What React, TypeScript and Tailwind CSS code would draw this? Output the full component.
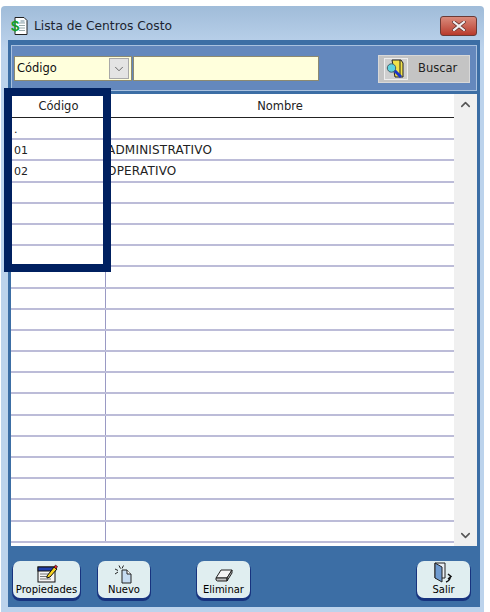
import React from 'react';
import { ChevronDown, ChevronUp } from 'lucide-react';

const rows = [
  ['.', '.'],
  ['01', 'ADMINISTRATIVO'],
  ['02', 'OPERATIVO'],
  ...Array.from({ length: 17 }, () => ['', '']),
];

function TitleIcon() {
  return (
    <svg width="18" height="20" viewBox="0 0 18 20">
      <path d="M4 1.500h9l3 3v14H4z" fill="#fff" stroke="#222" />
      <path d="M8 7h6M8 9.500h6M8 12h6M8 14.500h6" stroke="#9aa" />
      <rect x="9.500" y="4" width="4" height="3" fill="#b8c6cc" />
      <text x="0" y="15" fontSize="15" fontWeight="700" fill="#12a02a" fontFamily="Liberation Sans, sans-serif">$</text>
    </svg>
  );
}

function CloseIcon() {
  return (
    <svg width="14" height="10" viewBox="0 0 14 10">
      <path d="M2 1l10 8M12 1L2 9" stroke="#5a2a26" strokeWidth="3.500" strokeLinecap="square" />
      <path d="M2 1l10 8M12 1L2 9" stroke="#f1eef0" strokeWidth="2.200" strokeLinecap="square" />
    </svg>
  );
}

function SearchIcon() {
  return (
    <svg width="20" height="20" viewBox="0 0 20 20">
      <path d="M6 1h9l2 3v14H9z" fill="#f2e24a" stroke="#222" />
      <path d="M14 1v15" stroke="#222" />
      <path d="M8 11l7 7" stroke="#1a35c9" strokeWidth="3" />
      <circle cx="5.500" cy="9" r="4.200" fill="#5fd3e0" stroke="#44606a" />
    </svg>
  );
}

function PropiedadesIcon() {
  return (
    <svg width="22" height="20" viewBox="0 0 22 20">
      <rect x="2" y="3" width="17" height="15" fill="#f4f4f4" stroke="#111" />
      <rect x="2" y="3" width="17" height="4" fill="#1f3fae" stroke="#111" />
      <path d="M4 10h9M4 12.500h9M4 15h11" stroke="#777" />
      <path d="M11 12l7-9 3 2-7 8-3 1z" fill="#f6d21f" stroke="#111" />
      <path d="M18 3l1.500-2 2 1.500-1.500 2.500z" fill="#e01f2d" stroke="#111" strokeWidth=".6" />
    </svg>
  );
}

function NuevoIcon() {
  return (
    <svg width="20" height="20" viewBox="0 0 20 20">
      <path d="M8 6h5l4 4v9H8z" fill="#c6dcf2" stroke="#222" />
      <path d="M13 6v4h4" fill="#fff" stroke="#222" />
      <path d="M5 1.500l1.500 3M1 5l3 1.500M1 10l3-2M9.500 1.500L8 4.500" stroke="#222" />
    </svg>
  );
}

function EliminarIcon() {
  return (
    <svg width="20" height="16" viewBox="0 0 20 16">
      <path d="M7 2h11l-5 8H2z" fill="#f3f3f3" stroke="#222" />
      <path d="M2 10h11v3H3.500L2 12zM13 10l5-8v3l-5 8z" fill="#bdbdbd" stroke="#222" />
    </svg>
  );
}

function SalirIcon() {
  return (
    <svg width="22" height="22" viewBox="0 0 22 22">
      <path d="M2 1h10v15H2z" fill="#e8eef4" stroke="#222" />
      <path d="M2 1l7 4v15l-7-4z" fill="#6f9bd0" stroke="#222" />
      <path d="M15 12l3 2.500-3 2.500M13 20c2-.5 4-2.500 4.500-5.500" fill="none" stroke="#111" strokeWidth="1.500" />
    </svg>
  );
}

function ActionButton({ label, icon, className }: { label: string; icon: React.ReactNode; className: string }) {
  return (
    <button className={`flex h-[37px] flex-col items-center justify-end rounded-[7px] bg-[#e0eef0] pb-[2px] text-[10px] leading-[12px] text-black shadow-[0_2px_0_1px_#17337f] ${className}`}>
      {icon}
      <span>{label}</span>
    </button>
  );
}

export default function App() {
  return (
    <div className="relative h-[612px] w-[490px] overflow-hidden bg-white pt-[6px] font-['DejaVu_Sans','Liberation_Sans',sans-serif]">
      <div className="ml-[1px] flex h-[606px] w-[483px] flex-col rounded-t-[4px] bg-gradient-to-b from-[#a0bcd9] from-0% to-[#bcd3ec] to-[7%] pl-[7px] pr-[4px] pb-[5px]">
        {/* title bar */}
        <div className="flex h-[34px] shrink-0 items-center pl-[3px] pt-[6px]">
          <TitleIcon />
          <span className="ml-[5px] pt-[1px] text-[12.25px] text-[#1c2430]">Lista de Centros Costo</span>
          <button className="ml-auto mr-[3px] flex h-[20px] w-[37px] items-center justify-center rounded-[3px] border border-[#6b3a36] bg-gradient-to-b from-[#d98a7c] to-[#b8392b]">
            <CloseIcon />
          </button>
        </div>

        <div className="flex min-h-0 flex-1 flex-col bg-[#3c6ea5] px-[3px] pt-[5px]">
          {/* search strip */}
          <div className="flex h-[46px] shrink-0 items-center border border-[#a9c1df] bg-[#6488bd] pl-[2px] pr-[6px] pt-[1px]">
            <div className="flex h-[25px] w-[118px] items-center border border-[#8d8a70] bg-[#ffffdc] pl-[2px] text-[11.5px] text-[#111]">
              <span className="pt-[1px]">Código</span>
              <span className="ml-auto mr-[2px] flex h-[21px] w-[20px] items-center justify-center border border-[#a8a8a8] bg-[#e4e4e4] text-[#555]">
                <ChevronDown size={14} strokeWidth={1.500} />
              </span>
            </div>
            <div className="ml-[1px] h-[25px] w-[186px] border border-[#8d8a70] bg-[#ffffdc]" />
            <button className="ml-auto flex h-[28px] w-[92px] items-center border border-[#d8d8d8] bg-[#c4c4c4] pl-[5px] text-[11.5px] text-[#222]">
              <span className="flex h-[22px] w-[24px] items-center justify-center border border-[#eee] bg-[#cfcfcf]">
                <SearchIcon />
              </span>
              <span className="ml-[10px]">Buscar</span>
            </button>
          </div>

          {/* grid */}
          <div className="mt-[3px] flex h-[452px] shrink-0 overflow-hidden bg-white">
            <div className="w-[443px] shrink-0">
              <div className="mb-[1px] flex h-[24px] border-b border-[#222] pt-[3px] text-[11.5px] text-[#222]">
                <div className="flex w-[95px] items-center justify-center">Código</div>
                <div className="flex flex-1 items-center justify-center">Nombre</div>
              </div>
              {rows.map((row, i) => (
                <div key={i} className="flex h-[21.2px] border-b-2 border-[#bcbcd8] text-[11px] leading-[21px] text-[#222]">
                  <div className="w-[95px] border-r border-[#9a9ac4] pl-[3px]">{row[0]}</div>
                  <div className="flex-1 pl-[1px] text-[12px] tracking-[0.2px]">{row[1]}</div>
                </div>
              ))}
            </div>
            <div className="flex flex-1 flex-col items-center justify-between bg-[#f0f0f0] py-[3px] text-[#555]">
              <ChevronUp size={15} strokeWidth={2.500} />
              <ChevronDown size={15} strokeWidth={2.500} />
            </div>
          </div>

          {/* footer buttons */}
          <div className="flex flex-1 items-start pl-[2px] pr-[7px] pt-[15px]">
            <ActionButton label="Propiedades" icon={<PropiedadesIcon />} className="w-[67px]" />
            <ActionButton label="Nuevo" icon={<NuevoIcon />} className="ml-[18px] w-[52px]" />
            <ActionButton label="Eliminar" icon={<EliminarIcon />} className="ml-[47px] w-[53px]" />
            <ActionButton label="Salir" icon={<SalirIcon />} className="ml-auto w-[53px]" />
          </div>
        </div>
      </div>

      {/* highlight over the first column */}
      <div className="absolute left-[4px] top-[88px] h-[184px] w-[107px] border-[8px] border-[#002060]" />
    </div>
  );
}
